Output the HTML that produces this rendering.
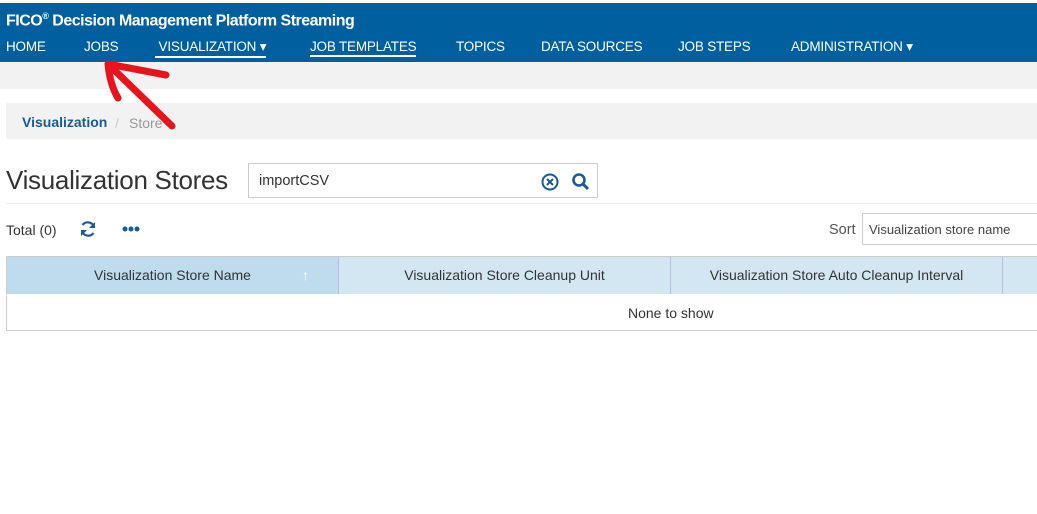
<!DOCTYPE html>
<html><head><style>
*{margin:0;padding:0;box-sizing:border-box}
body{width:1037px;height:514px;overflow:hidden;background:#fff;font-family:"Liberation Sans",Arial,sans-serif;position:relative}
.top{position:absolute;left:0;top:3px;width:1037px;height:59px;background:#005f9e;color:#fff}
.title{position:absolute;left:6px;top:8px;font-size:16px;font-weight:bold;letter-spacing:-0.5px}
.title sup{font-size:9px}
.nav{position:absolute;top:36px;font-size:13.5px;color:#fff;letter-spacing:-0.2px}
.u{border-bottom:2px solid #fff;padding-bottom:1px}
.band{position:absolute;left:0;top:62px;width:1037px;height:27px;background:#f2f2f2}
.bc{position:absolute;left:6px;top:103px;width:1031px;height:36px;background:#f2f2f2;font-size:14px}
.h1{position:absolute;left:6px;top:165px;font-size:26px;color:#333;letter-spacing:-0.3px}
.search{position:absolute;left:248px;top:163px;width:350px;height:35px;border:1px solid #ccc;font-size:14.5px;color:#333;padding:9px 10px}
.hr{position:absolute;left:6px;top:203px;width:1031px;height:1px;background:#eee}
.th{position:absolute;top:257px;height:37px;background:#d3e7f2;font-size:14px;color:#333;text-align:center;line-height:37px;border-right:1px solid #bbd}
</style></head><body>
<div class="top">
<div class="title">FICO<sup>®</sup> Decision Management Platform Streaming</div>
<span class="nav" style="left:6px">HOME</span>
<span class="nav" style="left:84px">JOBS</span>
<span class="nav u" style="left:155px">&nbsp;VISUALIZATION ▾</span>
<span class="nav u" style="left:310px">JOB TEMPLATES</span>
<span class="nav" style="left:456px">TOPICS</span>
<span class="nav" style="left:541px">DATA SOURCES</span>
<span class="nav" style="left:678px">JOB STEPS</span>
<span class="nav" style="left:791px">ADMINISTRATION ▾</span>
</div>
<div class="band"></div>
<div class="bc"><span style="position:absolute;left:16px;top:11px;color:#1a5a96;font-weight:bold">Visualization</span><span style="position:absolute;left:109px;top:12px;color:#ccc">/</span><span style="position:absolute;left:123px;top:12px;color:#999">Store</span></div>
<div class="h1">Visualization Stores</div>
<div class="search">importCSV
<svg style="position:absolute;left:292px;top:9px" width="18" height="18" viewBox="0 0 18 18"><circle cx="9" cy="9" r="7.5" fill="none" stroke="#1a5a96" stroke-width="2"/><path d="M6 6L12 12M12 6L6 12" stroke="#1a5a96" stroke-width="2"/></svg>
<svg style="position:absolute;left:322px;top:8px" width="20" height="20" viewBox="0 0 20 20"><circle cx="8" cy="8" r="5.5" fill="none" stroke="#1a5a96" stroke-width="2.6"/><path d="M12 12L17 17" stroke="#1a5a96" stroke-width="3"/></svg>
</div>
<div class="hr"></div>
<div style="position:absolute;left:6px;top:222px;font-size:14px;color:#333">Total (0)</div>
<svg style="position:absolute;left:79px;top:220px" width="18" height="18" viewBox="0 0 18 18"><path d="M15 7A6.5 6.5 0 0 0 3.5 5M3 11A6.5 6.5 0 0 0 14.5 13" fill="none" stroke="#1a5a96" stroke-width="2.2"/><path d="M16 2v6h-6zM2 16v-6h6z" fill="#1a5a96"/></svg>
<svg style="position:absolute;left:122px;top:226px" width="18" height="6"><circle cx="3" cy="3" r="2.5" fill="#1a5a96"/><circle cx="9" cy="3" r="2.5" fill="#1a5a96"/><circle cx="15" cy="3" r="2.5" fill="#1a5a96"/></svg>
<div style="position:absolute;left:829px;top:222px;font-size:14.5px;color:#555">Sort</div>
<div style="position:absolute;left:862px;top:213px;width:180px;height:32px;border:1px solid #ccc;font-size:13px;color:#444;padding:8px 6px">Visualization store name</div>
<div style="position:absolute;left:6px;top:256px;width:1040px;height:75px;border:1px solid #ccc"></div>
<div class="th" style="left:7px;width:332px;background:#bfdcee">Visualization Store Name<span style="position:absolute;left:295px;color:#fff">↑</span></div>
<div class="th" style="left:339px;width:332px">Visualization Store Cleanup Unit</div>
<div class="th" style="left:671px;width:332px">Visualization Store Auto Cleanup Interval</div>
<div class="th" style="left:1003px;width:40px"></div>
<div style="position:absolute;left:628px;top:305px;font-size:14px;color:#333">None to show</div>
<svg style="position:absolute;left:0;top:0" width="300" height="150"><path d="M172 126L108 64M108 64Q110 85 118 98M108 64Q140 70 166 75" fill="none" stroke="#e8141b" stroke-width="7" stroke-linecap="round"/></svg>
</body></html>
